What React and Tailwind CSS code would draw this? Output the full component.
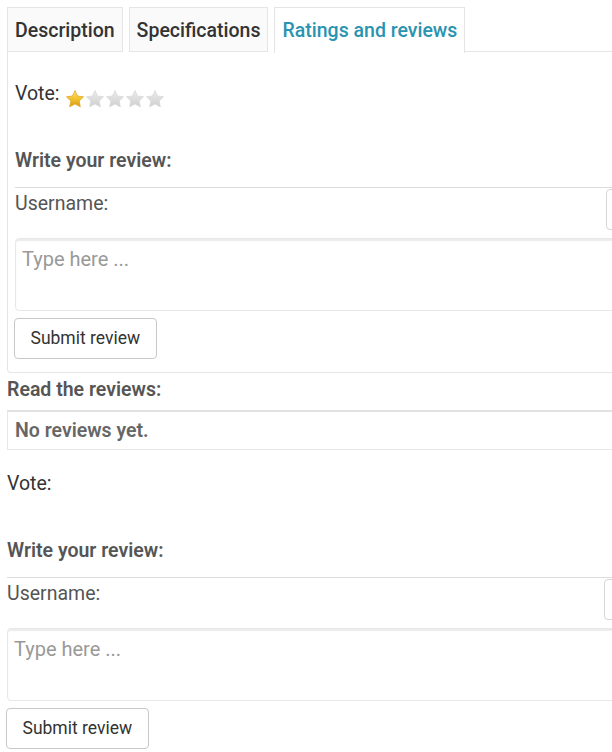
import React from 'react';

function Star({ on }) {
  const id = on ? 'starOn' : 'starOff';
  return (
    <svg width="20" height="20" viewBox="0 0 24 24" className="block">
      <defs>
        <linearGradient id={id} x1="0" y1="0" x2="0" y2="1">
          {on ? (
            <>
              <stop offset="0" stopColor="#fbe27a" />
              <stop offset="0.5" stopColor="#f3c230" />
              <stop offset="1" stopColor="#d99a10" />
            </>
          ) : (
            <>
              <stop offset="0" stopColor="#ececec" />
              <stop offset="1" stopColor="#cfcfcf" />
            </>
          )}
        </linearGradient>
      </defs>
      <path
        d="M12 1.8l3.1 6.6 7.2.9-5.3 5 1.4 7.1L12 17.9l-6.4 3.5 1.4-7.1-5.3-5 7.2-.9z"
        fill={`url(#${id})`}
        stroke={on ? '#d9a017' : '#d4d4d4'}
        strokeWidth="0.8"
        strokeLinejoin="round"
      />
    </svg>
  );
}

function ReviewForm({ stars, labelWidth }) {
  return (
    <div>
      <div className="flex items-end h-6 pt-px text-[19.5px] leading-6 text-[#333]">
        <span>Vote:</span>
        {stars && (
          <div className="flex ml-[5px] mb-[-3px]">
            {[0, 1, 2, 3, 4].map((i) => (
              <Star key={i} on={i === 0} />
            ))}
          </div>
        )}
      </div>
      <h3 className="mt-[42px] pt-px text-[19.5px] leading-6 font-semibold text-[#555]">Write your review:</h3>
      <div className="mt-[14px] flex border-t border-[#dcdcdc] h-[51px]">
        <div className={`${labelWidth} shrink-0 pt-1 text-[19.5px] leading-6 text-[#555]`}>Username:</div>
        <div className="shrink-0 mt-px w-[200px] h-[41px] rounded border border-[#d6d6d6] bg-white"></div>
      </div>
      <div className="h-[73px] w-[640px] rounded border border-[#e8e8e8] shadow-[inset_0_2px_1px_#ececec] px-[6px] pt-[8px] text-[20px] leading-6 text-[#999]">
        Type here ...
      </div>
      <button className="mt-[7px] -ml-px h-[41px] px-[15.5px] rounded border border-[#c8c8c8] bg-white text-[17.5px] text-[#333]">
        Submit review
      </button>
    </div>
  );
}

export default function App() {
  return (
    <div className="w-[612px] h-[752px] overflow-hidden bg-white" style={{ fontFamily: 'Roboto, "Open Sans", sans-serif' }}>
      <div className="w-[700px] pl-[7px] pt-[7px]">
        <div className="flex items-end">
          <div className="h-[45px] px-[7px] pt-[2px] flex items-center border border-[#e5e5e5] bg-[#fafafa] text-[19.5px] font-medium text-[#333]">Description</div>
          <div className="ml-[6px] h-[45px] px-[7px] pt-[2px] flex items-center border border-[#e5e5e5] bg-[#fafafa] text-[19.5px] font-medium text-[#333]">Specifications</div>
          <div className="ml-[6px] h-[46px] px-[7px] pt-[1px] flex items-center border border-b-0 border-[#e5e5e5] bg-white text-[19.5px] font-medium text-[#2a93b0] -mb-px relative">Ratings and reviews</div>
          <div className="flex-1 border-b border-[#e5e5e5]"></div>
        </div>
        <div className="border border-t-0 border-[#e5e5e5] rounded-bl pl-[7px] pt-[30px] pb-[13px]">
          <ReviewForm stars labelWidth="w-[591px]" />
        </div>
        <h3 className="mt-[5px] text-[19.5px] leading-6 font-semibold text-[#555]">Read the reviews:</h3>
        <div className="mt-[8px] h-[40px] border border-[#e8e8e8] border-t-2 border-t-[#e2e2e2] px-[7px] pt-px flex items-center text-[19.5px] font-semibold text-[#666]">
          No reviews yet.
        </div>
        <div className="mt-[22px]">
          <ReviewForm labelWidth="w-[597px]" />
        </div>
      </div>
    </div>
  );
}
